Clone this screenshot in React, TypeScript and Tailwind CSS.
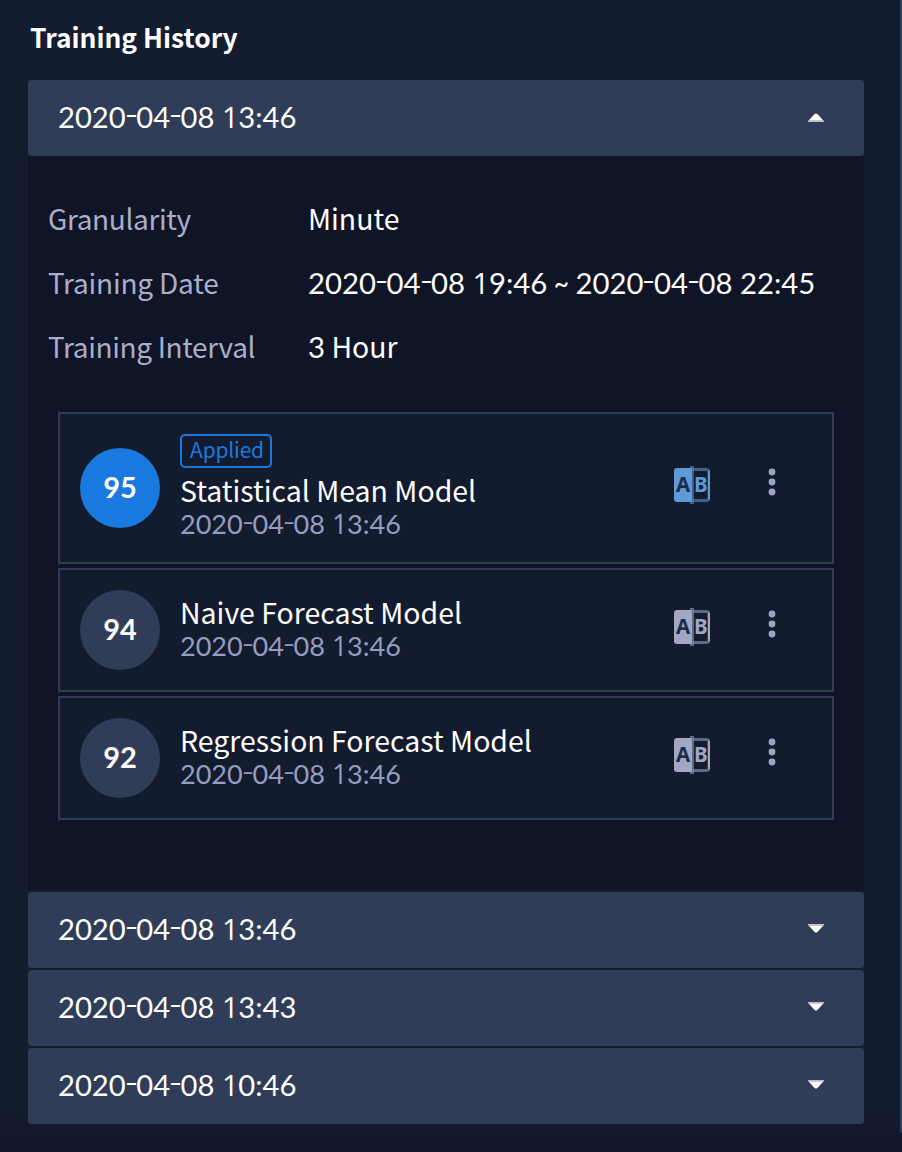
import { useState } from "react";

type Model = { score: number; name: string; date: string; applied?: boolean };

const models: Model[] = [
  { score: 95, name: "Statistical Mean Model", date: "2020-04-08 13:46", applied: true },
  { score: 94, name: "Naive Forecast Model", date: "2020-04-08 13:46" },
  { score: 92, name: "Regression Forecast Model", date: "2020-04-08 13:46" },
];

const history = ["2020-04-08 13:46", "2020-04-08 13:46", "2020-04-08 13:43", "2020-04-08 10:46"];

// Numerals use a rounder face, with a footless "1" and wide, thin hyphens centred on the digits.
function Numeric({ text }: { text: string }) {
  return (
    <span className="whitespace-pre font-['Lato',sans-serif] text-[0.9767em] leading-none">
      {text.split(/([1~-])/).map((part, i) => {
        if (part === "1")
          return (
            <span key={i} className="inline-block w-[0.56em] font-['Open_Sans',sans-serif] leading-none">
              1
            </span>
          );
        if (part === "-")
          return (
            <span key={i} className="relative -top-[0.07em] inline-block w-[0.36em] scale-x-125 scale-y-85 text-center leading-none">
              -
            </span>
          );
        if (part === "~")
          return (
            <span key={i} className="inline-block w-[0.45em] scale-x-90 leading-none">
              <span className="-ml-[0.07em]">~</span>
            </span>
          );
        return part;
      })}
    </span>
  );
}

function Caret({ open }: { open: boolean }) {
  return (
    <svg viewBox="0 0 16 10" className={open ? "-mt-0.5 h-[10px] w-4" : "-mt-[3px] h-[10px] w-4 rotate-180"}>
      <path d="M0.4 8.8 L6.6 2 Q8 0.8 9.4 2 L15.6 8.8 Z" fill="#fff" />
      <path d="M0 8.7H16V10H0Z" fill="#b9bec9" />
    </svg>
  );
}

function HistoryBar({ date, open, onClick }: { date: string; open: boolean; onClick?: () => void }) {
  return (
    <button
      onClick={onClick}
      className="flex h-[76px] w-full items-center justify-between rounded bg-[#303d58] pr-10 pl-[30px] text-[29.9px] text-white"
    >
      <span className="pb-[5px]">
        <Numeric text={date} />
      </span>
      <Caret open={open} />
    </button>
  );
}

function CompareIcon({ active }: { active?: boolean }) {
  return (
    <svg viewBox="0 0 36 38" className={active ? "h-[38px] w-9 text-[#5f9ad8]" : "h-[38px] w-9 text-[#a2a7c6]"}>
      <path d="M3 2H18V36H3Q0 36 0 33V5Q0 2 3 2Z" fill="currentColor" />
      <path d="M19 3.5H32Q35 3.5 35 6V32Q35 34.5 32 34.5H19" fill="none" stroke="currentColor" strokeWidth="3" opacity="0.55" />
      <path d="M35 5V33" stroke="currentColor" strokeWidth="2" />
      <path d="M18 0V38" stroke="currentColor" strokeWidth="4" opacity="0.55" />
      <text x="9.2" y="26.3" textAnchor="middle" fontSize="20.5" fontWeight="700" fill="#1d2c49" className="font-['Noto_Sans',sans-serif]">
        A
      </text>
      <text x="26.8" y="26.3" textAnchor="middle" fontSize="20.5" fontWeight="700" fill="currentColor" className="font-['Noto_Sans',sans-serif]">
        B
      </text>
    </svg>
  );
}

function ModelCard({ model }: { model: Model }) {
  return (
    <div
      className={
        model.applied
          ? "flex h-[152px] items-center border-2 border-[#2e3c57] bg-[#131b2f] pl-5"
          : "flex h-[124px] items-center border-2 border-[#2e3c57] bg-[#131b2f] pl-5"
      }
    >
      <div
        className={
          model.applied
            ? "flex size-20 items-center justify-center rounded-full bg-[#1a79de] pb-0.5 font-['Lato',sans-serif] text-[29px] font-bold text-white"
            : "flex size-20 items-center justify-center rounded-full bg-[#303d58] pb-0.5 font-['Lato',sans-serif] text-[29px] font-bold text-white"
        }
      >
        {model.score}
      </div>
      <div className="ml-5 flex w-[494px] flex-col items-start pb-1">
        {model.applied && (
          <span className="mt-px mb-[5px] flex h-[34px] w-[92px] items-center justify-center rounded-[5px] border-2 border-[#1a79de] pb-[3px] pl-0.5 text-[21px] leading-none tracking-[-0.2px] text-[#1a79de]">
            Applied
          </span>
        )}
        <span className="h-[33px] text-[28.45px] leading-[33px] whitespace-nowrap text-white">{model.name}</span>
        <span className="h-[33px] text-[27.7px] leading-[33px] text-[#969cbd]">
          <Numeric text={model.date} />
        </span>
      </div>
      <div className="mb-1.5">
        <CompareIcon active={model.applied} />
      </div>
      <svg viewBox="0 0 8 28" className="mb-3 ml-[58px] h-7 w-2" fill="#a0a4c4">
        <circle cx="4" cy="4" r="3.4" />
        <circle cx="4" cy="14" r="3.4" />
        <circle cx="4" cy="24" r="3.4" />
      </svg>
    </div>
  );
}

export default function App() {
  const [open, setOpen] = useState(true);
  return (
    <div className="flex h-[1152px] w-[902px] justify-between overflow-hidden bg-linear-to-b from-[#141c30] from-96% to-[#11172a] font-['Noto_Sans_CJK_KR',sans-serif]">
      <main className="ml-7 w-[836px]">
        <h1 className="flex h-20 items-center pb-1.5 pl-0.5 text-[26.4px] font-bold text-white">Training History</h1>
        <HistoryBar date={history[0]} open={open} onClick={() => setOpen(!open)} />
        {open && (
          <section className="h-[734px] bg-[#0f1526] pt-[30px]">
            <dl className="grid auto-rows-[64px] grid-cols-[260px_1fr] pl-[21px] text-[28.4px] leading-[64px] whitespace-nowrap text-white">
              <dt className="-ml-px text-[28px] tracking-[-0.35px] text-[#a9aec9]">Granularity</dt>
              <dd className="-ml-px">Minute</dd>
              <dt className="-ml-px text-[28px] tracking-[-0.2px] text-[#a9aec9]">Training Date</dt>
              <dd className="-ml-px -mt-px text-[30px]">
                <Numeric text="2020-04-08 19:46 ~ 2020-04-08 22:45" />
              </dd>
              <dt className="-ml-px text-[28px] tracking-[-0.35px] text-[#a9aec9]">Training Interval</dt>
              <dd className="-ml-px">
                <span className="text-[30px] leading-none">
                  <Numeric text="3" />
                </span>{" "}
                Hour
              </dd>
            </dl>
            <div className="mx-[30px] mt-[34px] flex flex-col gap-1">
              {models.map((m) => (
                <ModelCard key={m.score} model={m} />
              ))}
            </div>
          </section>
        )}
        <div className="mt-0.5 flex flex-col gap-0.5">
          {history.slice(1).map((d) => (
            <HistoryBar key={d} date={d} open={false} />
          ))}
        </div>
      </main>
      <div className="h-[1133px] w-0.5 rounded-bl bg-[#303d58]" />
    </div>
  );
}
